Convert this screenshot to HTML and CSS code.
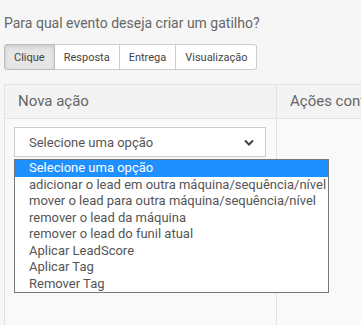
FILE: index.html
```html
<!DOCTYPE html>
<html lang="pt">
<head>
  <meta charset="UTF-8">
  <title>Gatilhos</title>
  <link rel="stylesheet" href="styles.css">
</head>
<body>
  <div class="container">
    <p class="pergunta">Para qual evento deseja criar um gatilho?</p>

    <div class="btn-group">
      <button class="btn active">Clique</button>
      <button class="btn">Resposta</button>
      <button class="btn">Entrega</button>
      <button class="btn">Visualização</button>
    </div>

    <div class="painel">
      <div class="coluna nova">
        <div class="cabecalho">Nova ação</div>
        <div class="corpo">
          <div class="select-wrap">
            <div class="select">
              <span>Selecione uma opção</span>
              <svg class="seta" width="10" height="7" viewBox="0 0 10 7">
                <path d="M1 1.5 L5 5.5 L9 1.5" fill="none" stroke="#444" stroke-width="2"/>
              </svg>
            </div>
            <ul class="opcoes">
              <li class="selecionada">Selecione uma opção</li>
              <li>adicionar o lead em outra máquina/sequência/nível</li>
              <li>mover o lead para outra máquina/sequência/nível</li>
              <li>remover o lead da máquina</li>
              <li>remover o lead do funil atual</li>
              <li>Aplicar LeadScore</li>
              <li>Aplicar Tag</li>
              <li>Remover Tag</li>
            </ul>
          </div>
        </div>
      </div>
      <div class="coluna configuradas">
        <div class="cabecalho">Ações configuradas</div>
        <div class="corpo"></div>
      </div>
    </div>
  </div>
</body>
</html>
```

FILE: styles.css
```css
html, body {
  margin: 0;
  padding: 0;
}

body {
  font-family: Roboto, "Liberation Sans", sans-serif;
  background: #f6f6f6;
  color: #555;
  overflow: hidden;
  width: 361px;
  height: 325px;
}

.container {
  padding: 14px 0 0 4px;
}

.pergunta {
  margin: 0 0 12px;
  font-size: 14px;
  line-height: 18px;
  color: #666;
}

.btn-group {
  display: flex;
  width: max-content;
}

.btn {
  font-family: inherit;
  font-size: 11px;
  color: #444;
  background: white;
  border: 1px solid #ccc;
  border-left: none;
  height: 26px;
  padding: 0 9px;
  cursor: pointer;
}

.btn:first-child {
  border-left: 1px solid #ccc;
  border-radius: 3px 0 0 3px;
}

.btn:last-child {
  border-radius: 0 3px 3px 0;
}

.btn.active {
  background: #e6e6e6;
  border-color: #bbb;
  box-shadow: inset 0 2px 4px rgba(0, 0, 0, 0.12);
}

.painel {
  margin-top: 14px;
  display: flex;
  width: 357px;
  overflow: hidden;
  border-top: 1px solid #e2e2e2;
  border-left: 1px solid #e2e2e2;
}

.coluna {
  display: flex;
  flex-direction: column;
}

.nova {
  flex: none;
  width: 271px;
  border-right: 1px solid #e2e2e2;
}

.configuradas {
  flex: 1;
  min-width: 0;
}

.cabecalho {
  height: 33px;
  line-height: 33px;
  padding-left: 13px;
  font-size: 15px;
  color: #666;
  background: #f3f3f3;
  border-bottom: 1px solid #e2e2e2;
  white-space: nowrap;
  overflow: hidden;
}

.corpo {
  background: #f9f9f9;
  height: 199px;
  padding: 8px 0 0 9px;
}

.select-wrap {
  position: relative;
  width: 252px;
}

.select {
  box-sizing: border-box;
  height: 30px;
  background: white;
  border: 1px solid #ccc;
  display: flex;
  align-items: center;
  justify-content: space-between;
  padding: 0 11px 0 14px;
  font-size: 13px;
  color: #555;
}

.opcoes {
  position: absolute;
  top: 32px;
  left: 0;
  margin: 0;
  padding: 0;
  list-style: none;
  width: 315px;
  box-sizing: border-box;
  background: white;
  border: 1px solid #777;
  font-size: 13px;
  color: #555;
}

.opcoes li {
  height: 16.5px;
  line-height: 16.5px;
  padding-left: 14px;
  white-space: nowrap;
}

.opcoes li.selecionada {
  background: #1e90ff;
  color: white;
}
```
